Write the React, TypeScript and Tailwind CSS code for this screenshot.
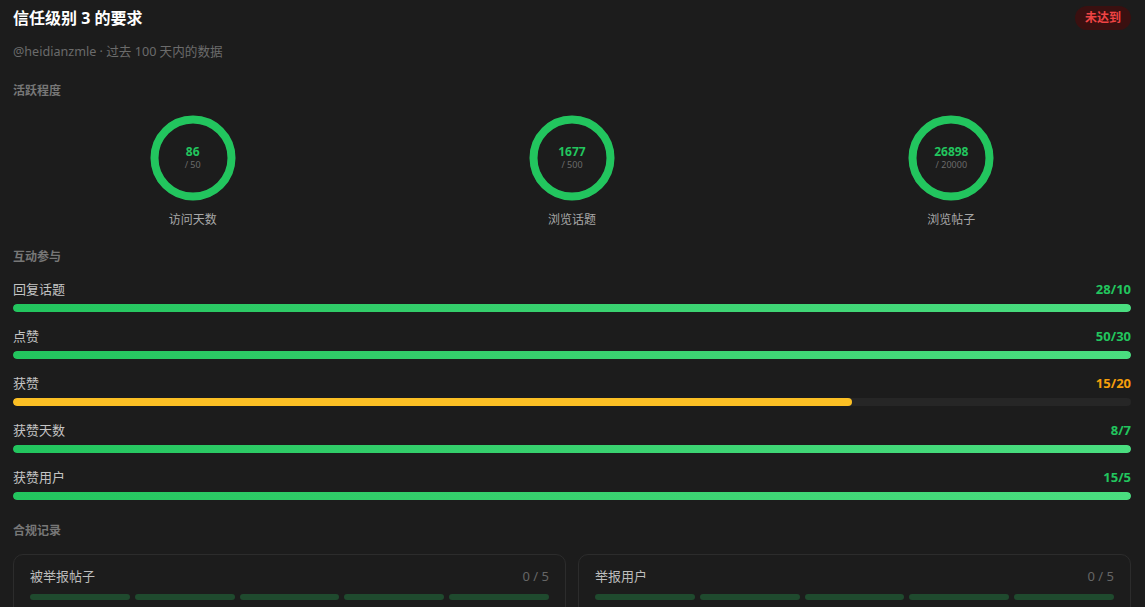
import React from "react";

const FONT = '"Noto Sans", "Noto Sans CJK SC", sans-serif';

type Ring = { value: number; target: number; label: string };
type Row = { label: string; value: number; target: number };

const rings: Ring[] = [
  { value: 86, target: 50, label: "访问天数" },
  { value: 1677, target: 500, label: "浏览话题" },
  { value: 26898, target: 20000, label: "浏览帖子" },
];

const rows: Row[] = [
  { label: "回复话题", value: 28, target: 10 },
  { label: "点赞", value: 50, target: 30 },
  { label: "获赞", value: 15, target: 20 },
  { label: "获赞天数", value: 8, target: 7 },
  { label: "获赞用户", value: 15, target: 5 },
];

const records = [
  { label: "被举报帖子", value: 0, max: 5 },
  { label: "举报用户", value: 0, max: 5 },
];

function ProgressRing({ value, target, label }: Ring) {
  const r = 38.5;
  const c = 2 * Math.PI * r;
  const pct = Math.min(1, value / target);
  return (
    <div className="flex flex-col items-center">
      <div className="relative w-[86px] h-[86px]">
        <svg width="86" height="86" viewBox="0 0 86 86" className="-rotate-90">
          <circle cx="43" cy="43" r={r} fill="none" stroke="#2a2a2a" strokeWidth="8" />
          <circle
            cx="43"
            cy="43"
            r={r}
            fill="none"
            stroke="#22c55e"
            strokeWidth="8"
            strokeDasharray={c}
            strokeDashoffset={c * (1 - pct)}
          />
        </svg>
        <div className="absolute inset-0 flex flex-col items-center justify-center pb-[1px]">
          <span className="text-[12px] leading-[14px] font-bold text-[#22c55e]">{value}</span>
          <span className="text-[9px] leading-[12px] text-[#6b6b6b]">/ {target}</span>
        </div>
      </div>
      <div className="mt-[11px] text-[12px] leading-[16px] text-[#a8a8a8]">{label}</div>
    </div>
  );
}

function BarRow({ label, value, target }: Row) {
  const met = value >= target;
  const pct = Math.min(100, (value / target) * 100);
  return (
    <div>
      <div className="flex items-center justify-between">
        <span className="text-[13px] leading-[18px] text-[#c4c4c4]">{label}</span>
        <span
          className={
            met
              ? "text-[13px] leading-[18px] font-bold text-[#22c55e]"
              : "text-[13px] leading-[18px] font-bold text-[#f59e0b]"
          }
        >
          {value}/{target}
        </span>
      </div>
      <div className="mt-[6px] h-2 rounded-full bg-[#262626] overflow-hidden">
        <div
          className={
            met
              ? "h-full rounded-full bg-gradient-to-r from-[#22c55e] to-[#4ade80]"
              : "h-full rounded-full bg-gradient-to-r from-[#fbbf24] to-[#fbbf24]"
          }
          style={{ width: `${pct}%` }}
        />
      </div>
    </div>
  );
}

function RecordCard({ label, value, max }: { label: string; value: number; max: number }) {
  return (
    <div className="rounded-[10px] border border-[#2c2c2c] px-4 pt-[12px] pb-4">
      <div className="flex items-center justify-between">
        <span className="text-[13px] leading-[18px] text-[#bdbdbd]">{label}</span>
        <span className="text-[13px] leading-[18px] text-[#666666]">
          {value} / {max}
        </span>
      </div>
      <div className="mt-[9px] flex gap-[5px]">
        {Array.from({ length: max }).map((_, i) => (
          <div key={i} className="h-[6px] flex-1 rounded-full bg-[#1f4a2e]" />
        ))}
      </div>
    </div>
  );
}

export default function App() {
  return (
    <div
      className="h-[607px] w-full overflow-hidden bg-[#1c1c1c] pl-[13px] pr-[14px] pt-[6px]"
      style={{ fontFamily: FONT }}
    >
      <div className="flex items-center justify-between h-6">
        <h1 className="text-[16px] leading-6 font-bold text-white">信任级别 3 的要求</h1>
        <span className="rounded-full bg-[#3a1010] px-[10px] text-[12px] leading-6 font-bold text-[#ef4444]">
          未达到
        </span>
      </div>
      <p className="mt-[14px] text-[12.6px] leading-4 text-[#6b6b6b]">@heidianzmle · 过去 100 天内的数据</p>

      <h2 className="mt-[23px] text-[12px] leading-4 font-semibold text-[#777777]">活跃程度</h2>
      <div className="mt-[16px] grid grid-cols-3 gap-5">
        {rings.map((r) => (
          <ProgressRing key={r.label} {...r} />
        ))}
      </div>

      <h2 className="mt-[21px] text-[12px] leading-4 font-semibold text-[#777777]">互动参与</h2>
      <div className="mt-[15px] flex flex-col gap-[15px]">
        {rows.map((r) => (
          <BarRow key={r.label} {...r} />
        ))}
      </div>

      <h2 className="mt-[23px] text-[12px] leading-4 font-semibold text-[#777777]">合规记录</h2>
      <div className="mt-[15px] grid grid-cols-2 gap-3">
        {records.map((r) => (
          <RecordCard key={r.label} {...r} />
        ))}
      </div>
    </div>
  );
}
